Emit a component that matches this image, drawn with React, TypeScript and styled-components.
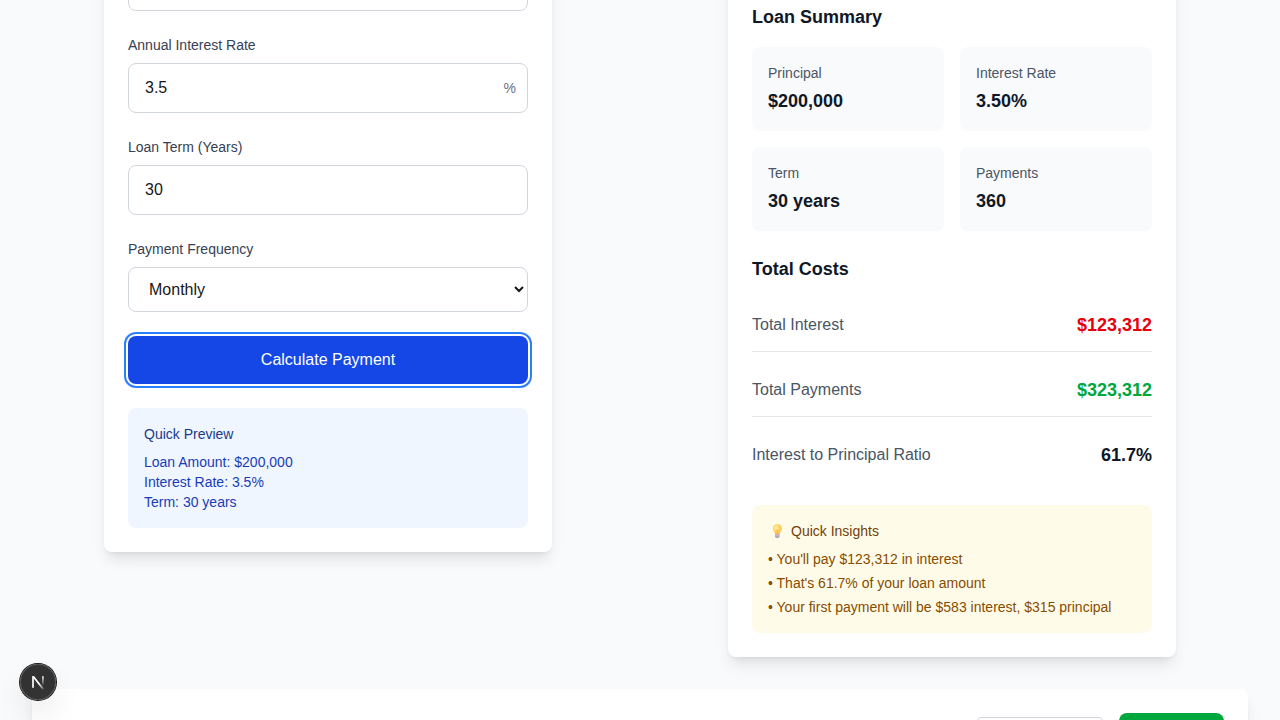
import React from 'react';
import styled, { createGlobalStyle } from 'styled-components';

const GlobalStyle = createGlobalStyle`
  *, *::before, *::after { box-sizing: border-box; }
  body {
    margin: 0;
    background: #f9fafb;
    color: #171717;
    font-family: "Liberation Sans", Arial, Helvetica, sans-serif;
    font-size: 16px;
    line-height: 24px;
  }
  h2, h3, h4, p, ul { margin: 0; padding: 0; }
  input, select, button { font: inherit; margin: 0; }
`;

const Page = styled.div`
  height: 100vh;
  overflow: hidden;
  background: #f9fafb;
`;

const Main = styled.main`
  display: flex;
  flex-direction: column;
  gap: 32px;
  margin-top: -91px;
  padding: 0 32px;
`;

const Columns = styled.div`
  display: grid;
  grid-template-columns: 1fr 1fr;
  gap: 32px;
  align-items: start;
  justify-items: center;
`;

const Card = styled.section`
  width: 100%;
  padding: 24px;
  background: #fff;
  border-radius: 8px;
  box-shadow: 0 10px 15px -3px rgba(0, 0, 0, 0.1), 0 4px 6px -4px rgba(0, 0, 0, 0.1);
`;

const FormCard = styled(Card)`
  display: flex;
  flex-direction: column;
  gap: 24px;
  max-width: 448px;
`;

const SummaryCard = styled(Card)`
  display: flex;
  flex-direction: column;
  gap: 24px;
  max-width: 448px;
  padding-top: 94px;
`;

const Field = styled.div`
  display: flex;
  flex-direction: column;
  gap: 8px;
`;

const Label = styled.label`
  min-height: 20px;
  font-size: 14px;
  line-height: 20px;
  color: #364153;
`;

const InputWrap = styled.div`
  position: relative;
  display: flex;
`;

const Input = styled.input`
  width: 100%;
  height: 50px;
  padding: 12px 16px;
  border: 1px solid #d1d5dc;
  border-radius: 8px;
  background: transparent;
  color: #171717;
  outline: none;
`;

const Suffix = styled.span`
  position: absolute;
  right: 12px;
  top: 15px;
  font-size: 14px;
  line-height: 20px;
  color: #6a7282;
`;

const Select = styled.select`
  width: 100%;
  height: 45px;
  padding: 12px 16px;
  border: 1px solid #d1d5dc;
  border-radius: 8px;
  background: transparent;
  color: #171717;
`;

const SubmitButton = styled.button`
  height: 48px;
  padding: 12px 16px;
  border: 0;
  border-radius: 8px;
  background: #1447e6;
  color: #fff;
  outline: none;
  box-shadow: 0 0 0 2px #fff, 0 0 0 4px #2b7fff;
`;

const Preview = styled.div`
  padding: 16px;
  border-radius: 8px;
  background: #eff6ff;
  color: #193cb8;
  font-size: 14px;
  line-height: 20px;
`;

const PanelTitle = styled.h4<{ $color: string }>`
  display: flex;
  align-items: center;
  margin-bottom: 8px;
  font-size: 14px;
  font-weight: 400;
  line-height: 20px;
  color: ${(p) => p.$color};
`;

const Block = styled.div`
  display: flex;
  flex-direction: column;
  gap: 16px;
`;

const Heading = styled.h3`
  font-size: 18px;
  font-weight: 700;
  line-height: 28px;
  color: #101828;
`;

const StatGrid = styled.div`
  display: grid;
  grid-template-columns: 1fr 1fr;
  gap: 16px;
`;

const Stat = styled.div`
  display: flex;
  flex-direction: column;
  gap: 4px;
  padding: 16px;
  border-radius: 8px;
  background: #f9fafb;
`;

const StatLabel = styled.span`
  font-size: 14px;
  line-height: 20px;
  color: #4a5565;
`;

const Value = styled.span<{ $color?: string }>`
  font-size: 18px;
  font-weight: 700;
  line-height: 28px;
  color: ${(p) => p.$color ?? '#101828'};
`;

const Costs = styled.div`
  display: flex;
  flex-direction: column;
  gap: 12px;
`;

const CostRow = styled.div`
  display: flex;
  justify-content: space-between;
  align-items: center;
  padding: 12px 0;
  color: #4a5565;
  &:not(:last-child) { border-bottom: 1px solid #e5e7eb; }
`;

const Insights = styled.div`
  padding: 16px;
  border-radius: 8px;
  background: #fefce8;
`;

const BulbIcon = styled.svg`
  flex: none;
  width: 19px;
  height: 16px;
  margin-right: 4px;
`;

const InsightList = styled.ul`
  display: flex;
  flex-direction: column;
  gap: 4px;
  list-style: none;
  font-size: 14px;
  line-height: 20px;
  color: #894b00;
`;

const Toolbar = styled(Card)`
  display: flex;
  justify-content: flex-end;
  align-items: flex-start;
  gap: 16px;
  height: 160px;
`;

const ViewSelect = styled.div`
  width: 126px;
  height: 32px;
  margin-top: 4px;
  border: 1px solid #d1d5dc;
  border-radius: 4px;
`;

const ExportButton = styled.button`
  width: 105px;
  height: 40px;
  border: 0;
  border-radius: 8px;
  background: #00a63e;
`;

const DevBadge = styled.div`
  position: fixed;
  left: 20px;
  bottom: 20px;
  width: 36px;
  height: 36px;
  border-radius: 50%;
  background: rgba(0, 0, 0, 0.8);
  box-shadow: 0 0 0 1px #171717, inset 0 0 0 1px rgba(255, 255, 255, 0.14),
    0 16px 32px -8px rgba(0, 0, 0, 0.24);
  svg { display: block; }
`;

const stats = [
  ['Principal', '$200,000'],
  ['Interest Rate', '3.50%'],
  ['Term', '30 years'],
  ['Payments', '360'],
];

const costs = [
  { label: 'Total Interest', value: '$123,312', color: '#e7000b' },
  { label: 'Total Payments', value: '$323,312', color: '#00a63e' },
  { label: 'Interest to Principal Ratio', value: '61.7%', color: '#101828' },
];

const insights = [
  "You'll pay $123,312 in interest",
  "That's 61.7% of your loan amount",
  'Your first payment will be $583 interest, $315 principal',
];

function Bulb() {
  return (
    <BulbIcon viewBox="0 0 19 16">
      <defs>
        <radialGradient id="glass" cx="0.38" cy="0.36" r="0.7">
          <stop stopColor="#fff0a8" />
          <stop offset="0.5" stopColor="#ffd766" />
          <stop offset="1" stopColor="#f5b648" />
        </radialGradient>
      </defs>
      <path
        d="M9.3 1C6.7 1 4.8 2.9 4.8 5.3c0 1.7.8 2.6 1.5 3.7.4.7.6 1.4.7 2.2h4.6c.1-.8.3-1.5.7-2.2.7-1.1 1.5-2 1.5-3.7C13.8 2.9 11.900 1 9.300 1z"
        fill="url(#glass)"
      />
      <path d="M8.300 6.500l1 .9 1-.9M9.300 7.400v3.600" stroke="#eda93c" strokeWidth="0.6" fill="none" />
      <path d="M7 11.200h4.600v2.300c0 .8-.8 1.500-2.300 1.500S7 14.300 7 13.500z" fill="#b5a2b8" />
      <path d="M7 12.700h4.600" stroke="#d8cbd8" strokeWidth="0.6" />
    </BulbIcon>
  );
}

function NextMark() {
  return (
    <svg width="36" height="36" viewBox="0 0 36 36" fill="none">
      <defs>
        <linearGradient id="diag" x1="19.500" y1="19.500" x2="24" y2="25.500" gradientUnits="userSpaceOnUse">
          <stop stopColor="#fff" />
          <stop offset="0.6" stopColor="#fff" stopOpacity="0.5" />
          <stop offset="1" stopColor="#fff" stopOpacity="0.1" />
        </linearGradient>
        <linearGradient id="stem" x1="22.900" y1="12" x2="22.900" y2="22" gradientUnits="userSpaceOnUse">
          <stop stopColor="#fff" />
          <stop offset="1" stopColor="#fff" stopOpacity="0" />
        </linearGradient>
      </defs>
      <path d="M12.200 12.200h2L24 24.800l-1.400 1L13.400 14z" fill="url(#diag)" />
      <path d="M13 12.200V23.800" stroke="#fff" strokeWidth="1.700" />
      <path d="M22.900 12.200V22" stroke="url(#stem)" strokeWidth="1.600" />
    </svg>
  );
}

export default function App() {
  return (
    <Page>
      <GlobalStyle />
      <Main>
        <Columns>
          <FormCard>
            <Field>
              <Label />
              <InputWrap><Input aria-label="Amount" /></InputWrap>
            </Field>
            <Field>
              <Label>Annual Interest Rate</Label>
              <InputWrap>
                <Input defaultValue="3.5" />
                <Suffix>%</Suffix>
              </InputWrap>
            </Field>
            <Field>
              <Label>Loan Term (Years)</Label>
              <InputWrap><Input defaultValue="30" /></InputWrap>
            </Field>
            <Field>
              <Label>Payment Frequency</Label>
              <Select defaultValue="Monthly">
                <option>Monthly</option>
              </Select>
            </Field>
            <SubmitButton type="button">Calculate Payment</SubmitButton>
            <Preview>
              <PanelTitle $color="#1c398e">Quick Preview</PanelTitle>
              <p>Loan Amount: $200,000</p>
              <p>Interest Rate: 3.5%</p>
              <p>Term: 30 years</p>
            </Preview>
          </FormCard>

          <SummaryCard>
            <Block>
              <Heading>Loan Summary</Heading>
              <StatGrid>
                {stats.map(([label, value]) => (
                  <Stat key={label}>
                    <StatLabel>{label}</StatLabel>
                    <Value>{value}</Value>
                  </Stat>
                ))}
              </StatGrid>
            </Block>
            <Block>
              <Heading>Total Costs</Heading>
              <Costs>
                {costs.map((c) => (
                  <CostRow key={c.label}>
                    <span>{c.label}</span>
                    <Value $color={c.color}>{c.value}</Value>
                  </CostRow>
                ))}
              </Costs>
            </Block>
            <Insights>
              <PanelTitle $color="#733e0a">
                <Bulb />
                Quick Insights
              </PanelTitle>
              <InsightList>
                {insights.map((text) => (
                  <li key={text}>• {text}</li>
                ))}
              </InsightList>
            </Insights>
          </SummaryCard>
        </Columns>

        <Toolbar>
          <ViewSelect />
          <ExportButton type="button" />
        </Toolbar>
      </Main>
      <DevBadge><NextMark /></DevBadge>
    </Page>
  );
}
